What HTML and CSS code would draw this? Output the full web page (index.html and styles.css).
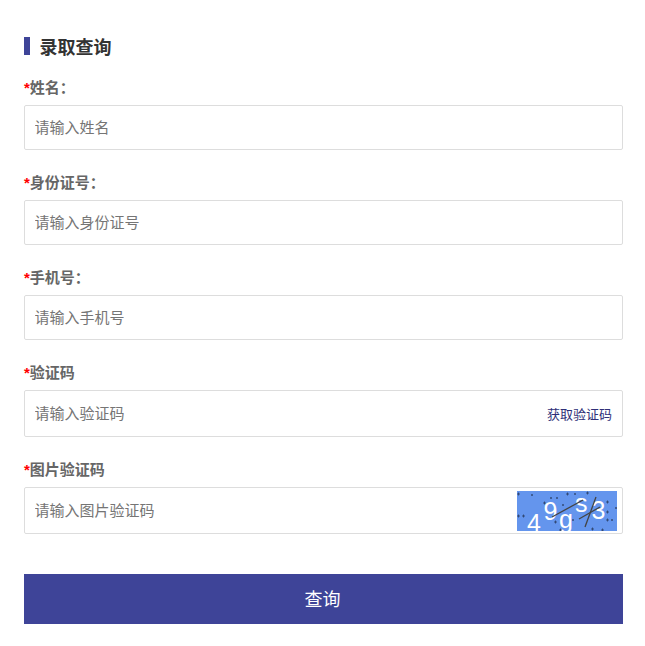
FILE: index.html
```html
<!DOCTYPE html>
<html lang="zh-CN">
<head>
    <meta charset="UTF-8">
    <meta name="viewport" content="width=device-width, initial-scale=1.0">
    <title>录取查询</title>
    <link rel="stylesheet" href="styles.css">
</head>
<body>
    <h1 class="page-title">录取查询</h1>

    <form class="query-form">
        <div class="field">
            <label class="field-label"><span class="required">*</span>姓名：</label>
            <div class="input-box">
                <input class="text-input" type="text" placeholder="请输入姓名">
            </div>
        </div>

        <div class="field">
            <label class="field-label"><span class="required">*</span>身份证号：</label>
            <div class="input-box">
                <input class="text-input" type="text" placeholder="请输入身份证号">
            </div>
        </div>

        <div class="field">
            <label class="field-label"><span class="required">*</span>手机号：</label>
            <div class="input-box">
                <input class="text-input" type="text" placeholder="请输入手机号">
            </div>
        </div>

        <div class="field">
            <label class="field-label"><span class="required">*</span>验证码</label>
            <div class="input-box input-box-tall">
                <input class="text-input" type="text" placeholder="请输入验证码">
                <a class="sms-link" href="#">获取验证码</a>
            </div>
        </div>

        <div class="field">
            <label class="field-label"><span class="required">*</span>图片验证码</label>
            <div class="input-box input-box-tall">
                <input class="text-input" type="text" placeholder="请输入图片验证码">
                <svg class="captcha" width="100" height="40" viewBox="0 0 100 40">
                    <rect width="100" height="40" fill="#6495ed"/>
                    <g fill="#fff" font-family="'Liberation Sans', sans-serif" font-size="25">
                        <text x="10" y="41">4</text>
                        <text x="26.500" y="29">9</text>
                        <text x="42" y="37">g</text>
                        <text x="58" y="21">s</text>
                        <text x="74.500" y="28">3</text>
                    </g>
                    <g stroke="#444" stroke-width="1.3" fill="none">
                        <path d="M35 26 L66 9"/>
                        <path d="M62 28 L83 16"/>
                        <path d="M68 36 L79 6"/>
                    </g>
                    <path stroke="#2c3f66" stroke-width="0.8" fill="none" d="M0 3h3M1.500 1.500v3M14 4h2M15 3v2M33 7h2M34 6v2M39 7h2M40 6v2M49 3h3M50.500 1.500v3M57 3h2M58 2v2M69 2h3M70.500 .5v3M26 12h3M27.500 10.500v3M45 14h2M46 13v2M89 11h3M90.500 9.500v3M98 17h2M99 16v2M0 25h3M1.500 23.500v3M5 25h3M6.500 23.500v3M89 21h3M90.500 19.500v3M89 29h3M90.500 27.500v3M37 31h3M38.500 29.500v3M55 29h2M56 28v2M94 29h2M95 28v2M42 39h3M43.500 37.500v3M74 38h3M75.500 36.500v3M84 39h3M85.500 37.500v3"/>
                </svg>
            </div>
        </div>

        <button class="submit-btn" type="button">查询</button>
    </form>
</body>
</html>
```

FILE: styles.css
```css
body {
    margin: 0;
    padding: 37px 22px 22px 24px;
    background: #fff;
    color: #666;
    font-family: "Liberation Sans", "Noto Sans CJK SC", sans-serif;
    font-size: 15px;
}
.page-title {
    margin: 0 0 22px;
    padding-left: 9.500px;
    border-left: 6px solid #3e4498;
    height: 18px;
    line-height: 22px;
    font-size: 18px;
    font-weight: bold;
    color: #333;
}
.field {
    margin-bottom: 22px;
}
.field-label {
    display: block;
    height: 20px;
    line-height: 22px;
    margin-bottom: 8px;
    font-weight: bold;
    color: #666;
}
.required {
    color: #f00;
}
.input-box {
    display: flex;
    align-items: center;
    height: 43px;
    padding: 0 5px 0 9.500px;
    border: 1px solid #ddd;
    border-radius: 2px;
}
.input-box-tall {
    height: 45px;
}
.text-input {
    flex: 1;
    min-width: 0;
    border: 0;
    outline: 0;
    padding: 0;
    background: none;
    font-family: inherit;
    font-size: 15px;
    color: #555;
}
.text-input::placeholder {
    color: #757575;
}
.sms-link {
    margin-right: 5px;
    font-size: 13px;
    color: #2f2f78;
    text-decoration: none;
}
.captcha {
    display: block;
    flex: none;
}
.submit-btn {
    display: block;
    width: 100%;
    height: 50px;
    margin-top: 40px;
    padding: 0 2px 2px 0;
    border: 0;
    background: #3e4498;
    color: #fff;
    font-family: inherit;
    font-size: 18px;
    cursor: pointer;
}
```
